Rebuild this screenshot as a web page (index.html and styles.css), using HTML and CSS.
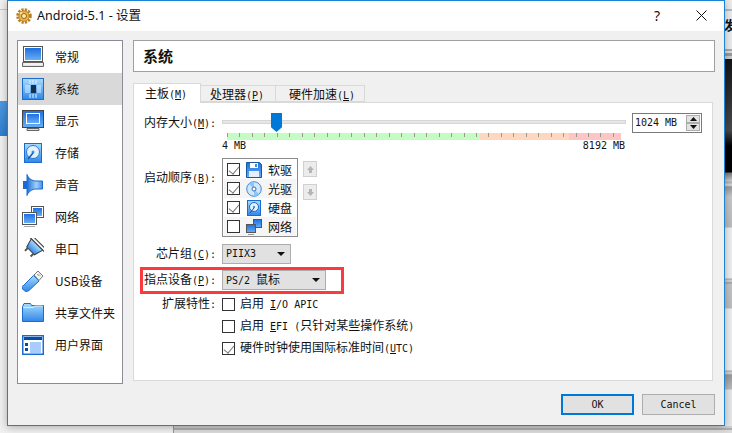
FILE: index.html
```html
<!DOCTYPE html>
<html lang="zh">
<head>
<meta charset="utf-8">
<title>Android-5.1 - 设置</title>
<link rel="stylesheet" href="styles.css">
</head>
<body>
<svg class="defs" width="0" height="0" aria-hidden="true">
  <defs>
    <linearGradient id="blue" x1="0" y1="0" x2="0" y2="1"><stop offset="0" stop-color="#1f6fe0"/><stop offset="1" stop-color="#66aef5"/></linearGradient>
    <linearGradient id="sky" x1="0" y1="0" x2="0" y2="1"><stop offset="0" stop-color="#a9dcfb"/><stop offset="1" stop-color="#2f86ea"/></linearGradient>
    <linearGradient id="cone" x1="0" y1="0" x2="1" y2="0"><stop offset="0" stop-color="#1e6ed8"/><stop offset=".6" stop-color="#9fd0f8"/><stop offset="1" stop-color="#3f8fe8"/></linearGradient>
  </defs>
</svg>
<div class="desktop">
  <div class="bg-blue"></div>
  <div class="bg-line"></div>
  <div class="bg-right"><span>发</span></div>
  <div class="bg-bottom"></div>
  <div class="dialog">
    <header class="titlebar">
      <svg class="app-icon" viewBox="0 0 16 16"><circle cx="8" cy="8" r="6.300" fill="none" stroke="#b9801f" stroke-width="3" stroke-dasharray="2.200 1.100"/><circle cx="8" cy="8" r="5.200" fill="#e8b348" stroke="#a76f17" stroke-width=".6"/><circle cx="8" cy="8" r="2.500" fill="#fbeab5" stroke="#9a6412"/><circle cx="5" cy="5" r="1" fill="#fff3c9"/></svg>
      <span class="title">Android-5.1 - 设置</span>
      <span class="help">?</span>
      <svg class="close" viewBox="0 0 11 11"><path d="M.5.5l10 10M10.5.5l-10 10" stroke="#111" fill="none"/></svg>
    </header>
    <div class="body">
      <nav class="sidebar">
        <div class="nav-item"><svg class="nav-icon" viewBox="0 0 22 22"><rect x="1.500" y=".5" width="19" height="15" fill="#fff" stroke="#555"/><rect x="3" y="2" width="16" height="12" fill="url(#blue)"/><path d="M.5 16.500h21v4H.5z" fill="#e4e4e4" stroke="#666"/><path d="M2 18h18" stroke="#fff"/></svg><span>常规</span></div>
        <div class="nav-item active"><svg class="nav-icon" viewBox="0 0 22 22"><rect x=".5" y=".5" width="21" height="21" fill="url(#sky)" stroke="#1c6cd0"/><rect x="9" y="7" width="5" height="8" fill="#12304f"/><path d="M3 8h5M3 10h5M3 12h5M3 14h5M15 8h4M15 10h4M15 12h4M15 14h4M8 2v4M11 2v4M14 2v4M8 16v4M11 16v4M14 16v4" stroke="#e3f1fd"/></svg><span>系统</span></div>
        <div class="nav-item"><svg class="nav-icon" viewBox="0 0 22 22"><rect x=".5" y=".5" width="21" height="17" fill="url(#blue)" stroke="#444"/><rect x="4" y="3" width="14" height="11" fill="#fff"/><rect x="5" y="4" width="12" height="9" fill="url(#blue)"/><path d="M5 18.500h12v2H5z" fill="#ddd" stroke="#666"/></svg><span>显示</span></div>
        <div class="nav-item"><svg class="nav-icon" viewBox="0 0 22 22"><rect x="2.500" y="1.500" width="17" height="19" fill="url(#sky)" stroke="#1c6cd0"/><circle cx="11" cy="10" r="6.500" fill="#e3f1fd" stroke="#2a7bd6"/><circle cx="11" cy="10" r="1.500" fill="#3d8fe8"/><path d="M6 17l5-6" stroke="#145aa8" stroke-width="1.500"/></svg><span>存储</span></div>
        <div class="nav-item"><svg class="nav-icon" viewBox="0 0 22 22"><path d="M5 .5C6 4 10 7 14 7h6.500v8H14c-4 0-8 3-9 6.500z" fill="url(#cone)" stroke="#1c6cd0"/><rect x="1" y="7" width="4" height="8" fill="#1c6cd0"/></svg><span>声音</span></div>
        <div class="nav-item"><svg class="nav-icon" viewBox="0 0 22 22"><rect x="9.500" y=".5" width="12" height="11" fill="#fff" stroke="#555"/><rect x="11" y="2" width="9" height="8" fill="url(#blue)"/><rect x=".5" y="6.500" width="14" height="12" fill="#fff" stroke="#555"/><rect x="2" y="8" width="11" height="9" fill="url(#blue)"/><path d="M2 20.500h11" stroke="#aaa"/></svg><span>网络</span></div>
        <div class="nav-item"><svg class="nav-icon" viewBox="0 0 22 22"><g transform="translate(12.500 9) rotate(45)"><path d="M-11-6.500h22v3h-22z" fill="#f4f4f4" stroke="#444"/><path d="M-8-3.500H8L5.500 5.500h-11z" fill="url(#sky)" stroke="#3a3f48"/><path d="M-4 5.500v4M4 5.500v4" stroke="#555" stroke-width="2"/></g></svg><span>串口</span></div>
        <div class="nav-item"><svg class="nav-icon" viewBox="0 0 22 22"><path d="M1.500 15.500l10-10 5.500 5.500-10 9.500c-2 1.500-4 1-5.500-.5s-1.500-3-.5-4.500z" fill="url(#sky)" stroke="#1c6cd0"/><path d="M12 5l4-4 5 5-4 4.500z" fill="#f2f2f2" stroke="#777"/><path d="M15.500 4.500l1 1M18 5.500l-1-1" stroke="#666"/></svg><span>USB设备</span></div>
        <div class="nav-item"><svg class="nav-icon" viewBox="0 0 22 22"><path d="M.5 4.500v15h21v-16H9.500l-1-2H2z" fill="url(#sky)" stroke="#1c6cd0"/><path d="M1.500 5.500h10l1-1.500h8" stroke="#d6edfc" fill="none"/></svg><span>共享文件夹</span></div>
        <div class="nav-item"><svg class="nav-icon" viewBox="0 0 22 22"><rect x=".75" y="1.750" width="20.500" height="18.500" fill="#fff" stroke="#1c6cd0" stroke-width="1.500"/><rect x="2" y="3" width="18" height="3" fill="#0b4a9e"/><rect x="3" y="9" width="3" height="3" fill="#0b4a9e"/><rect x="3" y="14" width="3" height="3" fill="#0b4a9e"/><rect x="8" y="8" width="11" height="11" fill="#a8cdfa"/></svg><span>用户界面</span></div>
      </nav>
      <main class="main">
        <h1 class="page-title">系统</h1>
        <div class="tabs">
          <span class="tab selected">主板<span class="a">(<u>M</u>)</span></span>
          <span class="tab second">处理器<span class="a">(<u>P</u>)</span></span>
          <span class="tab third">硬件加速<span class="a">(<u>L</u>)</span></span>
        </div>
        <section class="pane">
          <div class="form-row mem">
            <label class="lbl">内存大小<span class="a">(<u>M</u>):</span></label>
            <div class="slider">
              <div class="track"></div>
              <div class="thumb"></div>
              <div class="scale"><i class="green"></i><i class="orange"></i><i class="red"></i></div>
              <div class="scale-labels a"><span>4 MB</span><span>8192 MB</span></div>
            </div>
            <div class="spin"><span class="a">1024 MB</span><div class="spin-btns"><b><svg viewBox="0 0 7 4"><path d="M3.500 0L7 4H0z"/></svg></b><b><svg viewBox="0 0 7 4"><path d="M3.500 4L7 0H0z"/></svg></b></div></div>
          </div>
          <div class="form-row boot">
            <label class="lbl">启动顺序<span class="a">(<u>B</u>):</span></label>
            <div class="boot-list">
              <div class="boot-item"><span class="check on"></span><svg class="boot-icon" viewBox="0 0 16 16"><path d="M.5.500h13l2 2v13H.5z" fill="url(#blue)" stroke="#16589f"/><rect x="4" y="1" width="8" height="5" fill="#fff"/><rect x="9" y="2" width="2" height="3" fill="#3b8fe0"/><rect x="3" y="9" width="10" height="6" fill="#e6eefc"/></svg><span>软驱</span></div>
              <div class="boot-item alt"><span class="check on"></span><svg class="boot-icon" viewBox="0 0 16 16"><circle cx="8" cy="8" r="7.300" fill="#cfe6fb" stroke="#3e8bd8"/><path d="M8 8L3 3a7 7 0 0 1 5-2z" fill="#8fc4f5"/><path d="M8 8l5 5a7 7 0 0 1-5 2z" fill="#8fc4f5"/><circle cx="8" cy="8" r="2" fill="#fff" stroke="#2f6fb8"/></svg><span>光驱</span></div>
              <div class="boot-item"><span class="check on"></span><svg class="boot-icon" viewBox="0 0 16 16"><rect x="1.500" y=".5" width="13" height="15" fill="url(#sky)" stroke="#1c6cd0"/><circle cx="8" cy="7" r="4.500" fill="#e3f1fd" stroke="#1c6cd0"/><circle cx="8" cy="7" r="1" fill="#1c6cd0"/><path d="M4 13l4-5" stroke="#134f96"/></svg><span>硬盘</span></div>
              <div class="boot-item alt"><span class="check"></span><svg class="boot-icon" viewBox="0 0 16 16"><rect x="7.500" y=".5" width="8" height="8" fill="url(#blue)" stroke="#555"/><rect x=".5" y="5.500" width="9" height="8" fill="url(#blue)" stroke="#555"/><path d="M2 15.500h6" stroke="#999"/></svg><span>网络</span></div>
            </div>
            <div class="arrows">
              <span class="arrow"><svg viewBox="0 0 9 9"><path d="M4.500 1L8 5H6v3H3V5H1z" fill="#b5b5b5"/></svg></span>
              <span class="arrow"><svg viewBox="0 0 9 9"><path d="M4.500 8L8 4H6V1H3v3H1z" fill="#b5b5b5"/></svg></span>
            </div>
          </div>
          <div class="form-row chip">
            <label class="lbl">芯片组<span class="a">(<u>C</u>):</span></label>
            <div class="select short"><span class="a">PIIX3</span><i class="caret"></i></div>
          </div>
          <div class="form-row pointing">
            <label class="lbl">指点设备<span class="a">(<u>P</u>):</span></label>
            <div class="select long"><span><span class="a">PS/2 </span>鼠标</span><i class="caret"></i></div>
          </div>
          <div class="form-row ext">
            <label class="lbl">扩展特性<span class="a">:</span></label>
            <span class="check"></span><span class="opt">启用<span class="a"> <u>I</u>/O APIC</span></span>
          </div>
          <div class="form-row ext2">
            <span class="lbl"></span>
            <span class="check"></span><span class="opt">启用<span class="a"> <u>E</u>FI (</span>只针对某些操作系统<span class="a">)</span></span>
          </div>
          <div class="form-row ext2">
            <span class="lbl"></span>
            <span class="check on"></span><span class="opt">硬件时钟使用国际标准时间<span class="a">(<u>U</u>TC)</span></span>
          </div>
        </section>
        <footer class="buttons">
          <button class="btn default">OK</button>
          <button class="btn">Cancel</button>
        </footer>
      </main>
    </div>
  </div>
  <div class="highlight"></div>
</div>
</body>
</html>
```
FILE: styles.css
```css
* { box-sizing: border-box; }
html, body { margin: 0; height: 100%; }
body { overflow: hidden; font: 12px/14px "Noto Sans CJK SC", sans-serif; color: #111; }
u { text-decoration: underline; }
.defs { position: absolute; }
.a { font: 10px/14px "DejaVu Sans Mono", monospace; white-space: pre; }
.desktop { position: relative; width: 732px; height: 433px; background: #f0f0f0; overflow: hidden; padding-left: 7px; }
.bg-blue { position: absolute; left: 0; top: 101px; width: 8px; height: 35px; background: linear-gradient(#4f9ae0, #2f7fd0); }
.bg-line { position: absolute; left: 0; top: 9px; width: 8px; height: 1px; background: #c8c8c8; }
.bg-right { position: absolute; left: 724px; top: 0; width: 8px; height: 433px; overflow: hidden; background: linear-gradient(#ececec 0 9px, #bbb 9px 11px, #ececec 11px 49px, #aaa 49px 51px, #ddd 51px 53px, #999 53px 56px, #ccc 56px 59px, #141414 59px, #2a2a2a 90px, #4a4a4a 130px, #000 146px, #000 172px, #777 173px, #ccc 181px, #aaa 182px, #ddd 185px, #999 187px, #c8c8c8 197px, #bbb 227px, #efefef 228px, #efefef 278px, #aaa 279px, #ddd 281px, #999 283px, #c4c4c4 284px, #bdbdbd 308px, #efefef 309px, #efefef 370px, #aaa 371px, #ddd 373px, #999 375px, #bbb 389px, #e8e8e8 390px); }
.bg-right span { position: absolute; left: 0; top: 18px; font: 700 13px/13px "Noto Sans CJK SC", sans-serif; color: #111; }
.bg-bottom { position: absolute; left: 173px; top: 426px; right: 0; height: 7px; border-left: 1px solid #999; background: linear-gradient(#d0d0d0 0 2px, #b0b0b0 2px 4px, #dcdcdc 4px); }
.dialog { position: relative; width: 718px; height: 426px; border: 1px solid #1883d7; background: #f0f0f0; display: flex; flex-direction: column; box-shadow: 0 1px 8px rgba(0,0,0,.3); }
.titlebar { height: 30px; background: #fff; display: flex; align-items: center; padding: 0 17px 1px 8px; flex: none; }
.app-icon { width: 16px; height: 16px; margin-right: 5px; flex: none; }
.title { font: 12.5px/16px "Noto Sans", "Noto Sans CJK SC", sans-serif; flex: 1; }
.help { margin-right: 36px; font: 14px/16px "Noto Sans", sans-serif; }
.close { width: 11px; height: 11px; }
.body { flex: 1; display: flex; padding: 9px 9px 10px 9px; gap: 10px; min-height: 0; }
.sidebar { width: 106px; height: 344px; background: #fff; border: 1px solid #8c8c96; flex: none; }
.nav-item { height: 32px; display: flex; align-items: center; padding-left: 4px; gap: 11px; }
.nav-item span { padding-bottom: 1px; white-space: nowrap; }
.nav-item.active { background: #d9d9d9; }
.nav-icon { width: 22px; height: 22px; flex: none; }
.main { flex: 1; display: flex; flex-direction: column; min-width: 0; }
.page-title { margin: 0; height: 32px; background: #fff; border: 1px solid #a0a0a0; font: 700 15px/30px "Noto Sans CJK SC", sans-serif; padding-left: 9px; flex: none; }
.tabs { margin-top: 11px; display: flex; height: 19px; flex: none; position: relative; z-index: 1; }
.tab { height: 17px; margin-top: 2px; background: #f0f0f0; border: 1px solid #d9d9d9; border-left: 0; line-height: 16px; white-space: nowrap; }
.tab.selected { width: 68px; height: 20px; margin-top: 0; padding-left: 11px; background: #fff; border-left: 1px solid #d9d9d9; border-bottom: 0; line-height: 18px; }
.tab.second { width: 75px; padding-left: 9px; }
.tab.third { width: 89px; padding-left: 13px; }
.pane { height: 279px; width: 580px; background: #fff; border: 1px solid #d9d9d9; padding-left: 10px; flex: none; }
.form-row { display: flex; align-items: center; }
.lbl { width: 72px; margin-right: 6px; text-align: right; flex: none; white-space: nowrap; }
.mem { height: 55px; align-items: flex-start; padding-top: 10px; }
.mem .lbl { padding-top: 2px; }
.slider { position: relative; width: 404px; height: 40px; flex: none; }
.track { position: absolute; left: 0; right: 0; top: 7px; height: 4px; background: #e6e6e6; border: 1px solid #d6d6d6; }
.thumb { position: absolute; left: 49px; top: 0; width: 11px; height: 19px; background: #0078d7; clip-path: polygon(0 0,100% 0,100% 75%,50% 100%,0 75%); }
.scale { position: absolute; left: 5px; width: 394px; top: 20px; height: 7px; display: flex; }
.scale::before { content: ""; position: absolute; inset: 0 0 3px; background: repeating-linear-gradient(90deg, #9a9a8a 0 1px, transparent 1px 12.45px); }
.scale i { display: block; height: 7px; }
.green { width: 253px; background: #c4fcc4; }
.orange { width: 89px; background: #ffd6c0; }
.red { flex: 1; background: #ffc4c4; }
.scale-labels { position: absolute; left: 0; right: 1px; top: 26px; display: flex; justify-content: space-between; }
.spin { margin-left: 6px; width: 70px; height: 20px; border: 1px solid #7a7a7a; background: #fff; display: flex; align-items: center; justify-content: space-between; padding: 0 1px 0 2px; flex: none; }
.spin-btns { width: 14px; height: 16px; display: flex; flex-direction: column; }
.spin-btns b { flex: 1; background: #e3e3e3; border: 1px solid #adadad; display: flex; align-items: center; justify-content: center; }
.spin-btns svg { width: 7px; height: 4px; fill: #111; }
.boot { align-items: flex-start; height: 79px; }
.boot .lbl { padding-top: 12px; }
.boot-list { width: 76px; height: 79px; border: 1px solid #8c8c8c; padding: 1px; flex: none; }
.boot-item { height: 19px; display: flex; align-items: center; padding-left: 3px; gap: 6px; }
.boot-item.alt { background: #f5f5f5; }
.check { width: 13px; height: 13px; border: 1px solid #333; background: #fff; flex: none; position: relative; }
.check.on::after { content: ""; position: absolute; left: 3px; top: 0; width: 5px; height: 9px; border: solid #777; border-width: 0 1.500px 1.500px 0; transform: rotate(40deg); }
.boot-icon { width: 16px; height: 16px; flex: none; }
.arrows { display: flex; flex-direction: column; gap: 7px; margin: 3px 0 0 5px; }
.arrow { width: 14px; height: 16px; background: #ececec; border: 1px solid #d0d0d0; display: flex; align-items: center; justify-content: center; }
.arrow svg { width: 9px; height: 9px; }
.chip { height: 20px; margin-top: 7px; }
.select { height: 20px; background: #e1e1e1; border: 1px solid #adadad; display: flex; align-items: center; justify-content: space-between; padding: 0 5px 0 3px; }
.select.short { width: 69px; }
.select.long { width: 104px; }
.caret { width: 0; height: 0; border: 4px solid transparent; border-top: 4px solid #111; border-bottom: 0; }
.pointing { height: 20px; margin-top: 6px; }
.ext { height: 20px; margin-top: 4px; }
.ext2 { height: 20px; margin-top: 2px; }
.opt { margin-left: 5px; white-space: nowrap; }
.buttons { display: flex; justify-content: flex-end; gap: 8px; margin-top: 13px; flex: none; }
.btn { width: 73px; height: 21px; background: #e1e1e1; border: 1px solid #adadad; font: 10px/14px "DejaVu Sans Mono", monospace; color: #111; padding: 0; }
.btn.default { border: 2px solid #0078d7; }
.highlight { position: absolute; left: 140px; top: 267px; width: 204px; height: 27px; border: 3px solid #f93a3f; pointer-events: none; }
```
